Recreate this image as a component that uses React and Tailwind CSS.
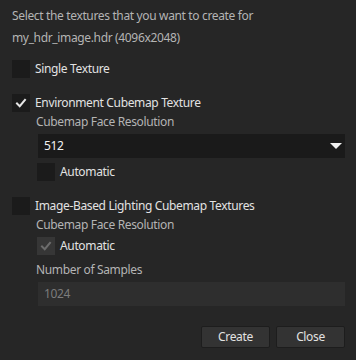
import React from 'react';

const Check = ({ color = '#e6e6e6' }) => (
  <svg width="12" height="12" viewBox="0 0 12 12" fill="none">
    <path d="M2 6.5 L4.7 9.2 L10 2.8" stroke={color} strokeWidth="2" strokeLinecap="square" />
  </svg>
);

const Box = ({ checked, disabled }) => (
  <div
    className={`w-[18px] h-[18px] flex items-center justify-center shrink-0 ${disabled ? 'bg-[#363636]' : 'bg-[#1b1b1b]'}`}
  >
    {checked && <Check color={disabled ? '#6c6c6c' : '#e6e6e6'} />}
  </div>
);

const CheckRow = ({ label, checked, disabled, className }) => (
  <div className={`flex items-center h-[18px] gap-[5px] ${className}`}>
    <Box checked={checked} disabled={disabled} />
    <span className="text-[#e2e2e2]">{label}</span>
  </div>
);

export default function App() {
  return (
    <div
      className="w-[356px] h-[360px] bg-[#262626] text-[12px] tracking-[-0.35px] pl-3 pr-[11px] pt-[5px] flex flex-col"
      style={{ fontFamily: '"Noto Sans", "Open Sans", sans-serif' }}
    >
      <div className="leading-[22px] text-[#b4b4b4]">Select the textures that you want to create for</div>
      <div className="leading-[22px] text-[#b4b4b4]">my_hdr_image.hdr (4096x2048)</div>

      <CheckRow label="Single Texture" className="mt-[11px]" />

      <CheckRow label="Environment Cubemap Texture" checked className="mt-4" />
      <div className="pl-6 flex flex-col">
        <div className="leading-[20px] text-[#b4b4b4]">Cubemap Face Resolution</div>
        <div className="mt-[2px] ml-[2px] h-6 bg-[#1a1a1a] flex items-center justify-between pl-[6px] pr-[3px]">
          <span className="text-[#f2f2f2]">512</span>
          <svg width="12" height="6" viewBox="0 0 12 6">
            <path d="M0 0 H12 L6 6 Z" fill="#f0f0f0" />
          </svg>
        </div>
        <CheckRow label="Automatic" className="mt-[5px] ml-px" />
      </div>

      <CheckRow label="Image-Based Lighting Cubemap Textures" className="mt-4" />
      <div className="pl-6 flex flex-col">
        <div className="leading-[20px] text-[#b4b4b4]">Cubemap Face Resolution</div>
        <CheckRow label="Automatic" checked disabled className="mt-[2px] ml-px" />
        <div className="mt-[5px] leading-[20px] text-[#b4b4b4]">Number of Samples</div>
        <div className="mt-[2px] ml-[2px] h-6 bg-[#2e2e2e] flex items-center pl-[6px]">
          <span className="text-[#7c7c7c]">1024</span>
        </div>
      </div>

      <div className="mt-5 flex justify-end gap-[6px]">
        <button className="w-[69px] h-[22px] bg-[#333333] border border-[#1d1d1d] rounded-[2px] text-[#e2e2e2] leading-none">
          Create
        </button>
        <button className="w-[69px] h-[22px] bg-[#333333] border border-[#1d1d1d] rounded-[2px] text-[#e2e2e2] leading-none">
          Close
        </button>
      </div>
    </div>
  );
}
